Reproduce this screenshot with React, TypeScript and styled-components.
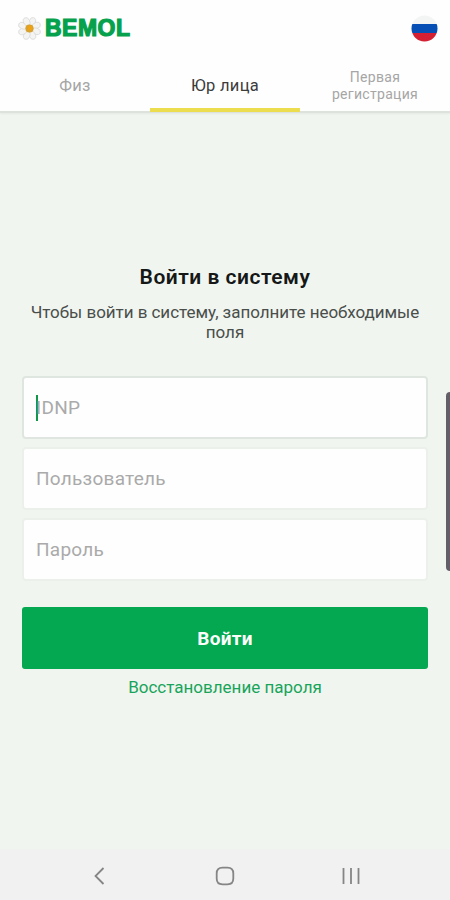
import React from 'react';
import styled, { createGlobalStyle } from 'styled-components';

const GlobalStyle = createGlobalStyle`
  * { box-sizing: border-box; }
  body { margin: 0; background: #f0f5f0; font-family: Roboto, "Liberation Sans", sans-serif; }
`;

const Screen = styled.div`
  position: relative;
  display: flex;
  flex-direction: column;
  width: 450px;
  height: 900px;
  overflow: hidden;
  background: #f0f5f0;
`;

const Header = styled.header`
  display: flex;
  justify-content: space-between;
  align-items: center;
  height: 56px;
  padding: 0 12px 0 17px;
  background: #fefefe;
`;

const Brand = styled.div`
  display: flex;
  align-items: center;
  gap: 3px;
`;

const BrandName = styled.span`
  font: bold 23px/26px "Liberation Sans", Arial, sans-serif;
  letter-spacing: 0.5px;
  color: #06a14c;
  -webkit-text-stroke: 1.2px #06a14c;
`;

const Tabs = styled.nav`
  display: grid;
  grid-template-columns: repeat(3, 150px);
  height: 57px;
  background: #fefefe;
  border-bottom: 2px solid #dde2dd;
  box-shadow: 0 1px 2px rgba(0, 0, 0, 0.05);
`;

const Tab = styled.button<{ $active?: boolean; $small?: boolean }>`
  display: flex;
  justify-content: center;
  align-items: center;
  height: 56px;
  padding: 7px 0 0;
  border: 0;
  border-bottom: 4px solid ${p => (p.$active ? '#ecdd4e' : 'transparent')};
  background: none;
  font-family: inherit;
  font-size: ${p => (p.$small ? '14px' : '16.5px')};
  line-height: 17px;
  letter-spacing: 0.3px;
  color: ${p => (p.$active ? '#3c3c3c' : '#a6a6a6')};
`;

const Form = styled.main`
  display: flex;
  flex: 1;
  flex-direction: column;
  padding: 149px 22px 0;
`;

const Title = styled.h1`
  margin: 0;
  font-size: 21px;
  font-weight: 600;
  line-height: 30px;
  letter-spacing: 0.5px;
  text-align: center;
  color: #151817;
`;

const Hint = styled.p`
  margin: 10px 0 34px;
  font-size: 17px;
  line-height: 20px;
  letter-spacing: -0.04px;
  text-align: center;
  color: #4a4e4b;
`;

const Fields = styled.div`
  display: grid;
  grid-auto-rows: 63px;
  row-gap: 8px;
`;

const Field = styled.label<{ $focused?: boolean }>`
  display: flex;
  align-items: center;
  padding: 0 12px;
  border: ${p => (p.$focused ? '2px solid #dfe5df' : '2px solid #ebf0eb')};
  border-radius: 4px;
  background: #fefefe;
  font-size: 19px;
  letter-spacing: 0.25px;
  color: #aaa;
`;

const Caret = styled.i`
  width: 2px;
  height: 26px;
  margin-right: -2px;
  background: #12964a;
`;

const Submit = styled.button`
  height: 62px;
  margin-top: 26px;
  border: 0;
  border-radius: 3px;
  background: #03a850;
  font-family: inherit;
  font-size: 19px;
  font-weight: 700;
  letter-spacing: 0.3px;
  color: #fcfffc;
`;

const Recovery = styled.a`
  margin-top: 8px;
  font-size: 17px;
  line-height: 21px;
  letter-spacing: 0;
  text-align: center;
  color: #18a45a;
`;

const EdgeHandle = styled.div`
  position: absolute;
  top: 392px;
  right: 0;
  width: 4px;
  height: 179px;
  border-radius: 4px 0 0 4px;
  background: #625f68;
`;

const SystemBar = styled.footer`
  display: flex;
  justify-content: space-between;
  align-items: center;
  height: 51px;
  padding: 2px 87px 0;
  background: #f1f1f1;
`;

const Daisy = () => (
  <svg width="25" height="25" viewBox="-12.5 -12.5 25 25">
    <circle r="7" fill="#dedfdd" />
    {[0, 45, 90, 135, 180, 225, 270, 315].map(angle => (
      <ellipse key={angle} cx="0" cy="-7.4" rx="3.1" ry="4.2" fill="#f4f4f3" stroke="#d2d2d2" strokeWidth="0.6" transform={`rotate(${angle + 22})`} />
    ))}
    <circle r="4.1" fill="#d9a12d" />
    <circle cx="0.6" cy="-0.6" r="2.2" fill="#efa313" />
  </svg>
);

const RussianFlag = () => (
  <svg width="27" height="27" viewBox="0 0 27 27">
    <clipPath id="flag-disc"><circle cx="13.5" cy="13.5" r="13" /></clipPath>
    <g clipPath="url(#flag-disc)">
      <path fill="#f3f4f4" d="M0 0h27v9H0z" />
      <path fill="#064fb5" d="M0 9h27v9H0z" />
      <path fill="#d51f32" d="M0 18h27v9H0z" />
    </g>
  </svg>
);

const NavIcon = ({ d }: { d: string }) => (
  <svg width="24" height="24" viewBox="0 0 24 24" fill="none" stroke="#858585" strokeWidth="1.8"><path d={d} /></svg>
);

export default function App() {
  return (
    <>
      <GlobalStyle />
      <Screen>
        <Header>
          <Brand><Daisy /><BrandName>BEMOL</BrandName></Brand>
          <RussianFlag />
        </Header>
        <Tabs>
          <Tab>Физ</Tab>
          <Tab $active>Юр лица</Tab>
          <Tab $small>Первая<br />регистрация</Tab>
        </Tabs>
        <Form>
          <Title>Войти в систему</Title>
          <Hint>Чтобы войти в систему, заполните необходимые<br />поля</Hint>
          <Fields>
            <Field $focused><Caret />IDNP</Field>
            <Field>Пользователь</Field>
            <Field>Пароль</Field>
          </Fields>
          <Submit>Войти</Submit>
          <Recovery>Восстановление пароля</Recovery>
        </Form>
        <SystemBar>
          <NavIcon d="M16.5 4 8.5 12l8 8" />
          <NavIcon d="M9.5 3.7h5q5.8 0 5.8 5.8v5q0 5.8-5.8 5.8h-5q-5.8 0-5.8-5.8v-5q0-5.8 5.8-5.8Z" />
          <NavIcon d="M4.5 4v16M12 4v16M19.5 4v16" />
        </SystemBar>
        <EdgeHandle />
      </Screen>
    </>
  );
}
